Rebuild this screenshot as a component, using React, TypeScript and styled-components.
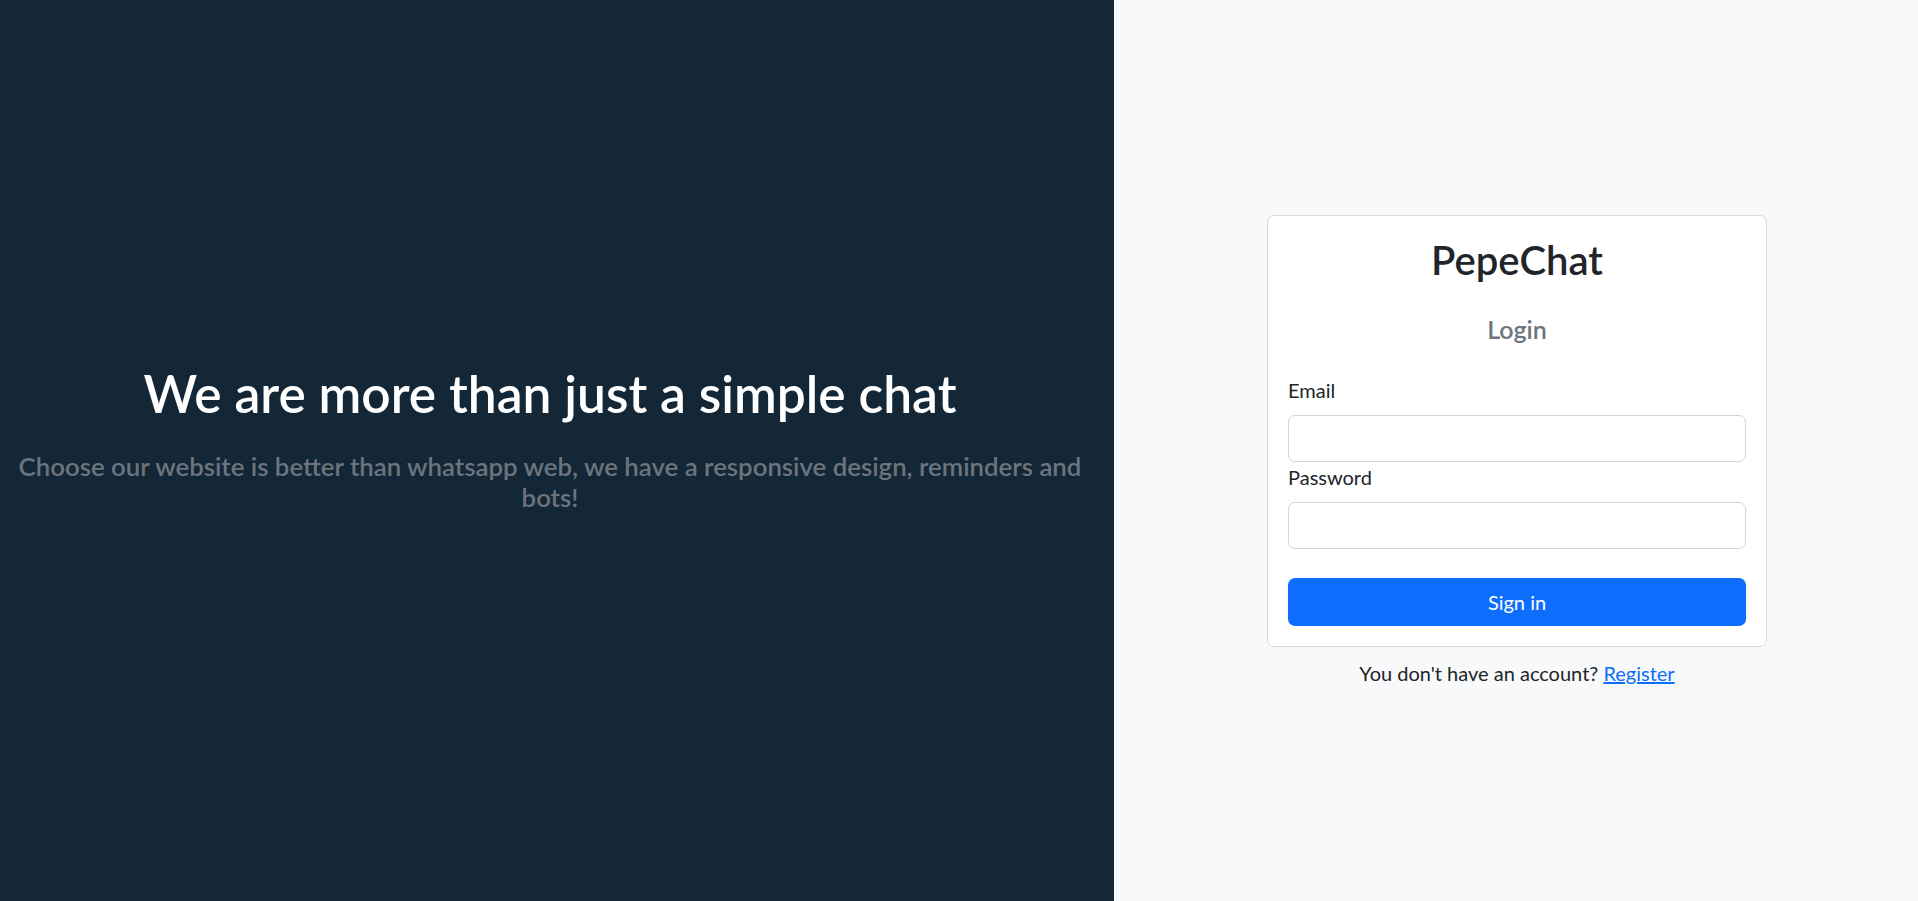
import React from "react";
import styled, { createGlobalStyle } from "styled-components";

const Global = createGlobalStyle`
  html, body { margin: 0; padding: 0; }
  body {
    font-family: "Segoe UI", "Lato", "Liberation Sans", sans-serif;
    color: #212529;
    -webkit-font-smoothing: antialiased;
  }
  * { box-sizing: border-box; }
`;

const Page = styled.div`
  display: flex;
  width: 100%;
  height: 901px;
`;

const Hero = styled.section`
  width: 1114px;
  flex-shrink: 0;
  background: #132737;
  display: flex;
  flex-direction: column;
  justify-content: center;
  align-items: center;
  text-align: center;
  padding: 0 26px 0 12px;
`;

const HeroTitle = styled.h1`
  margin: 0 0 27px;
  font-size: 51.5px;
  font-weight: 600;
  line-height: 1.2;
  color: #ffffff;
`;

const HeroText = styled.h5`
  margin: 0 0 25px;
  font-size: 25.8px;
  font-weight: 600;
  line-height: 1.2;
  color: #6c757d;
`;

const Side = styled.section`
  flex: 1;
  background: #f8f9fa;
  display: flex;
  flex-direction: column;
  justify-content: center;
  align-items: center;
  padding: 2px 0 0 2px;
`;

const Card = styled.form`
  width: 500px;
  background: #ffffff;
  border: 1px solid #d6d8db;
  border-radius: 7px;
  padding: 20px;
  display: flex;
  flex-direction: column;
`;

const Brand = styled.h2`
  margin: 0 0 30px;
  text-align: center;
  font-size: 40px;
  font-weight: 600;
  line-height: 1.2;
  color: #212529;
`;

const Subtitle = styled.h5`
  margin: 0 0 31px;
  text-align: center;
  font-size: 25px;
  font-weight: 600;
  line-height: 1.2;
  color: #6c757d;
`;

const Label = styled.label`
  display: block;
  font-size: 20px;
  line-height: 1.5;
  margin-bottom: 10px;
`;

const Input = styled.input<{ $last?: boolean }>`
  display: block;
  width: 100%;
  height: 47px;
  padding: 7px 15px;
  font-size: 20px;
  border: 1px solid #ced4da;
  border-radius: 7px;
  background: #fff;
  margin-bottom: ${(p) => (p.$last ? "29px" : "0")};
  outline: none;
`;

const Button = styled.button`
  height: 48px;
  width: 100%;
  border: none;
  border-radius: 7px;
  background: #0d6efd;
  color: #fff;
  font-family: inherit;
  font-size: 20px;
  line-height: 1.5;
  cursor: pointer;
`;

const Footer = styled.p`
  margin: 11px 0 0;
  font-size: 20px;
  line-height: 1.5;
  color: #212529;
`;

const Link = styled.a`
  color: #0d6efd;
  text-decoration: underline;
`;

export default function App() {
  return (
    <>
      <Global />
      <Page>
        <Hero>
          <HeroTitle>We are more than just a simple chat</HeroTitle>
          <HeroText>
            Choose our website is better than whatsapp web, we have a responsive design, reminders and bots!
          </HeroText>
        </Hero>
        <Side>
          <Card onSubmit={(e) => e.preventDefault()}>
            <Brand>PepeChat</Brand>
            <Subtitle>Login</Subtitle>
            <Label htmlFor="email">Email</Label>
            <Input id="email" type="email" />
            <Label htmlFor="password">Password</Label>
            <Input id="password" type="password" $last />
            <Button type="submit">Sign in</Button>
          </Card>
          <Footer>
            You don't have an account? <Link href="#">Register</Link>
          </Footer>
        </Side>
      </Page>
    </>
  );
}
